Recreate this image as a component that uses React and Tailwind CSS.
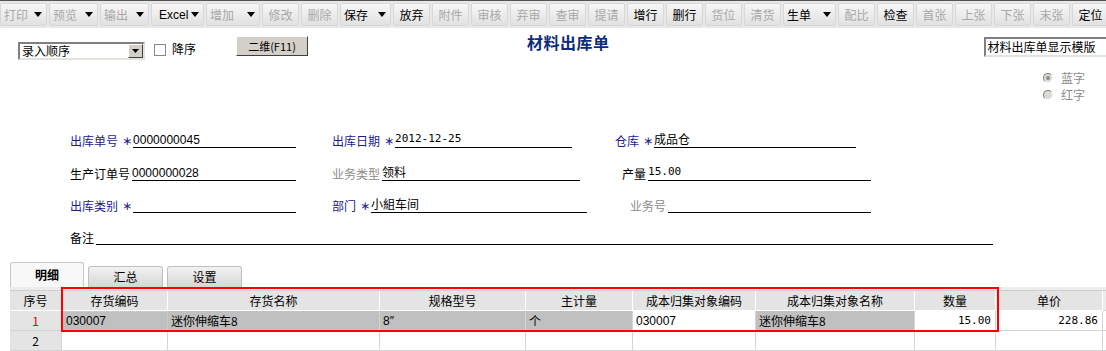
import React from 'react';

const tools = [
  { label: '打印', on: false, drop: true, w: 'w-[47px]' },
  { label: '预览', on: false, drop: true, w: 'w-[49px]' },
  { label: '输出', on: false, drop: true, w: 'w-[49px]' },
  { label: 'Excel', on: true, drop: true, w: 'w-[53px]' },
  { label: '增加', on: false, drop: true, w: 'w-[54px]' },
  { label: '修改', on: false, w: 'w-[37px]' },
  { label: '删除', on: false, w: 'w-[37px]' },
  { label: '保存', on: true, drop: true, w: 'w-[51px]' },
  { label: '放弃', on: true, w: 'w-[37px]' },
  { label: '附件', on: false, w: 'w-[37px]' },
  { label: '审核', on: false, w: 'w-[37px]' },
  { label: '弃审', on: false, w: 'w-[37px]' },
  { label: '查审', on: false, w: 'w-[37px]' },
  { label: '提请', on: false, w: 'w-[37px]' },
  { label: '增行', on: true, w: 'w-[37px]' },
  { label: '删行', on: true, w: 'w-[37px]' },
  { label: '货位', on: false, w: 'w-[37px]' },
  { label: '清货', on: false, w: 'w-[37px]' },
  { label: '生单', on: true, drop: true, w: 'w-[53px]' },
  { label: '配比', on: false, w: 'w-[37px]' },
  { label: '检查', on: true, w: 'w-[37px]' },
  { label: '首张', on: false, w: 'w-[37px]' },
  { label: '上张', on: false, w: 'w-[37px]' },
  { label: '下张', on: false, w: 'w-[37px]' },
  { label: '末张', on: false, w: 'w-[37px]' },
  { label: '定位', on: true, w: 'w-[37px]' },
];

const cols = ['序号', '存货编码', '存货名称', '规格型号', '主计量', '成本归集对象编码', '成本归集对象名称', '数量', '单价'];

function Arrow() {
  return (
    <svg width="8" height="5" viewBox="0 0 8 5" className="shrink-0">
      <path d="M0 0h8L4 5z" fill="#000" />
    </svg>
  );
}

function ToolButton({ t }) {
  return (
    <div
      className={`${t.w} h-[23px] shrink-0 flex items-center ${t.drop ? 'justify-between pl-[3px] pr-[4px]' : 'justify-center'} rounded-[2px] border border-[#d8d8d8] bg-gradient-to-b from-[#f7f7f7] to-[#e1e1e1] text-[12px] whitespace-nowrap ${t.on ? 'text-black' : 'text-[#a8a8a8]'}`}
    >
      <span className={t.label === 'Excel' ? "font-['Liberation_Sans'] pl-[4px]" : ''}>{t.label}</span>
      {t.drop && <Arrow />}
    </div>
  );
}

function Field({ label, star, value, labelClass = 'text-[#1c1c8c]', w, ml = '', mono }) {
  return (
    <div className={`flex items-end shrink-0 ${w} ${ml}`}>
      <span className={`${labelClass} leading-[14px] whitespace-nowrap`}>{label}</span>
      {star && <span className="text-[#1c1c8c] font-['DejaVu_Sans'] text-[12px] leading-[14px] ml-[4px] mr-[1px]">∗</span>}
      <div className={`flex-1 border-b border-black h-[16px] leading-[14px] whitespace-nowrap ${mono ? "font-['DejaVu_Sans_Mono'] text-[11px]" : ''} ${!star ? 'ml-[2px]' : ''}`}>
        {value}
      </div>
    </div>
  );
}

export default function App() {
  const row1 = [
    { t: '1', red: true },
    { t: '030007', gray: true, focus: true },
    { t: '迷你伸缩车8', gray: true },
    { t: '8″', gray: true },
    { t: '个', gray: true },
    { t: '030007' },
    { t: '迷你伸缩车8', gray: true },
    { t: '15.00', right: true },
    { t: '228.86', right: true },
  ];

  return (
    <div className="w-[1106px] h-[351px] overflow-hidden bg-white font-['Noto_Sans_CJK_SC',sans-serif] text-[12px] text-black relative">
      {/* 工具栏 */}
      <div className="h-[28px] bg-[#e8e8e8] border-t border-[#555] flex items-center gap-[2px] overflow-hidden">
        {tools.map((t) => (
          <ToolButton key={t.label} t={t} />
        ))}
      </div>

      {/* 排序、标题 */}
      <div className="h-[34px] flex items-start whitespace-nowrap">
        <div className="ml-[18px] mt-[14px] w-[127px] shrink-0 h-[18px] flex items-center border-2 border-t-[#808080] border-l-[#808080] border-b-[#e4e2dc] border-r-[#e4e2dc] bg-white">
          <span className="flex-1 pl-[2px] leading-[14px]">录入顺序</span>
          <div className="w-[15px] h-[14px] bg-[#d4d0c8] border border-t-white border-l-white border-b-[#404040] border-r-[#404040] flex items-center justify-center">
            <svg width="7" height="4" viewBox="0 0 7 4"><path d="M0 0h7L3.5 4z" fill="#000" /></svg>
          </div>
        </div>
        <div className="ml-[9px] mt-[16px] w-[12px] h-[12px] shrink-0 border border-[#8a8a8a] bg-white" />
        <span className="ml-[6px] mt-[13px] leading-[16px] shrink-0">降序</span>
        <div className="ml-[40px] mt-[8px] w-[72px] shrink-0 h-[20px] bg-[#d4d0c8] border border-t-white border-l-white border-b-[#404040] border-r-[#404040] flex items-center justify-center text-[11px] leading-[14px]">
          二维(F11)
        </div>
        <div className="ml-[219px] mt-[5px] shrink-0 text-[16px] font-bold text-[#0b2c7c] leading-[18px] tracking-[0.5px]">材料出库单</div>
        <div className="ml-[374px] mt-[9px] w-[130px] shrink-0 h-[20px] flex items-center border-2 border-r-0 border-t-[#808080] border-l-[#808080] border-b-[#e4e2dc] bg-white">
          <span className="pl-[2px] leading-[14px] whitespace-nowrap">材料出库单显示模版</span>
        </div>
      </div>

      {/* 蓝字 / 红字 */}
      <div className="flex flex-col items-end pr-[21px] pt-[9px] gap-[3px] text-[#8c8c8c]">
        {['蓝字', '红字'].map((r, i) => (
          <div key={r} className="flex items-center gap-[8px] h-[14px]">
            <span className="w-[10px] h-[10px] rounded-full bg-[#dcdad4] border border-t-[#808080] border-l-[#808080] border-b-white border-r-white flex items-center justify-center">
              {i === 0 && <span className="w-[4px] h-[4px] rounded-full bg-[#8c8c8c]" />}
            </span>
            <span className="leading-[14px]">{r}</span>
          </div>
        ))}
      </div>

      {/* 表头字段 */}
      <div className="pl-[70px] flex flex-col">
        <div className="h-[46px] flex items-end">
          <Field label="出库单号" star value={<span className="font-['Liberation_Sans']">0000000045</span>} w="w-[226px]" />
          <Field label="出库日期" star value="2012-12-25" mono w="w-[240px]" ml="ml-[36px]" />
          <Field label="仓库" star value="成品仓" w="w-[241px]" ml="ml-[43px]" />
        </div>
        <div className="h-[33px] flex items-end">
          <Field label="生产订单号" labelClass="text-black" value={<span className="font-['Liberation_Sans']">0000000028</span>} w="w-[226px]" />
          <Field label="业务类型" labelClass="text-[#8c8c8c]" value="领料" w="w-[248px]" ml="ml-[36px]" />
          <Field label="产量" labelClass="text-black" value="15.00" mono w="w-[249px]" ml="ml-[42px]" />
        </div>
        <div className="h-[32px] flex items-end">
          <Field label="出库类别" star value="" w="w-[226px]" />
          <Field label="部门" star value="小組车间" w="w-[255px]" ml="ml-[36px]" />
          <Field label="业务号" labelClass="text-[#8c8c8c]" value="" w="w-[241px]" ml="ml-[43px]" />
        </div>
        <div className="h-[32px] flex items-end">
          <Field label="备注" labelClass="text-black" value="" w="w-[923px]" />
        </div>
      </div>

      {/* 页签 */}
      <div className="mt-[18px] pl-[10px] flex items-end gap-[4px] h-[24px]">
        <div className="w-[74px] h-[25px] rounded-t-[3px] border border-b-0 border-[#c8c8c8] bg-[#f8f8f8] flex items-center justify-center font-bold">明细</div>
        <div className="w-[75px] h-[21px] rounded-t-[3px] border border-b-0 border-[#c0c0c0] bg-gradient-to-b from-[#f2f2f2] to-[#d6d6d6] flex items-center justify-center">汇总</div>
        <div className="w-[75px] h-[21px] rounded-t-[3px] border border-b-0 border-[#c0c0c0] bg-gradient-to-b from-[#f2f2f2] to-[#d6d6d6] flex items-center justify-center">设置</div>
      </div>

      {/* 表格 */}
      <div className="ml-[10px] relative">
        <div className="h-[3px] bg-[#ececec]" />
        <div className="grid grid-cols-[52px_106px_212px_146px_107px_123px_159px_81px_107px_1fr] border-t border-[#d0d0d0]">
          {cols.map((c) => (
            <div key={c} className="h-[20px] bg-[#e4e4e4] border-r border-white border-b border-[#d4d4d4] flex items-center justify-center leading-[14px]">
              {c}
            </div>
          ))}
          <div className="h-[20px] bg-[#ececec] border-b border-[#d4d4d4]" />

          {row1.map((c, i) => (
            <div
              key={i}
              className={`h-[20px] border-r border-b border-[#d4d4d4] flex items-center leading-[14px] whitespace-nowrap ${
                i === 0 ? 'bg-[#e4e4e4] justify-center text-[#e00000]' : c.gray ? 'bg-[#c0c0c0]' : 'bg-white'
              } ${c.right ? "justify-end pr-[4px] font-['DejaVu_Sans_Mono'] text-[11px]" : i > 0 ? 'pl-[3px]' : ''} ${
                c.focus ? 'border border-dotted border-[#303030]' : ''
              } ${c.t === '030007' || c.t === '8″' ? "font-['Liberation_Sans']" : ''}`}
            >
              {c.t}
            </div>
          ))}
          <div className="h-[20px] border-b border-[#d4d4d4] bg-white" />

          <div className="h-[20px] bg-[#e4e4e4] border-r border-b border-[#d4d4d4] flex items-center justify-center">2</div>
          {cols.slice(1).map((c) => (
            <div key={c} className="h-[20px] bg-white border-r border-b border-[#d4d4d4]" />
          ))}
          <div className="h-[20px] bg-white border-b border-[#d4d4d4]" />
        </div>

        {/* 红框标注 */}
        <div className="absolute left-[51px] top-[0px] w-[938px] h-[45px] border-2 border-[#ff0000] pointer-events-none" />
      </div>
    </div>
  );
}
